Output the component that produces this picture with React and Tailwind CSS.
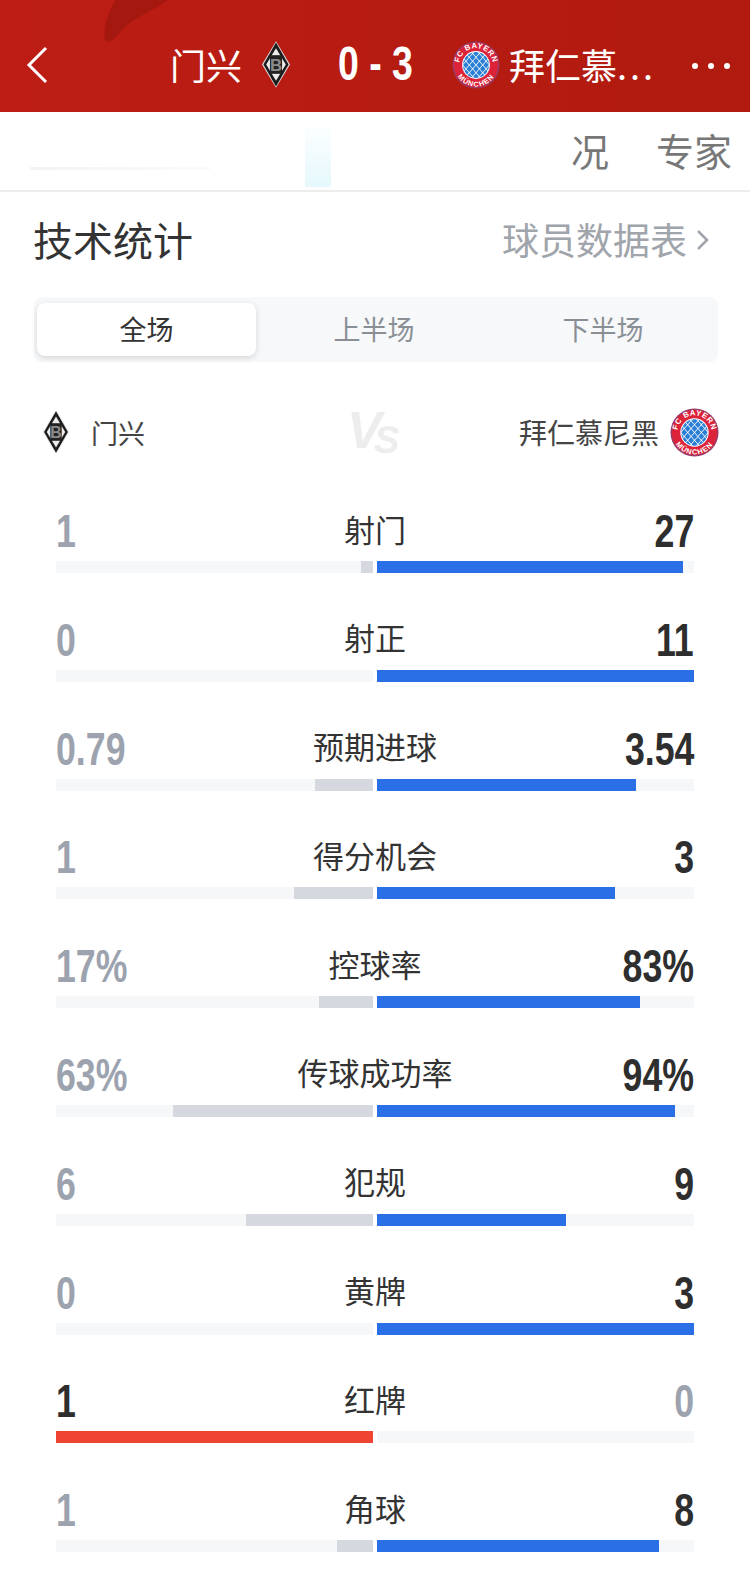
const stats = [
  { label: "射门", left: "1", right: "27", l: 12, r: 306 },
  { label: "射正", left: "0", right: "11", l: 0, r: 317 },
  { label: "预期进球", left: "0.79", right: "3.54", l: 58, r: 259 },
  { label: "得分机会", left: "1", right: "3", l: 79, r: 238 },
  { label: "控球率", left: "17%", right: "83%", l: 54, r: 263 },
  { label: "传球成功率", left: "63%", right: "94%", l: 200, r: 298 },
  { label: "犯规", left: "6", right: "9", l: 127, r: 189 },
  { label: "黄牌", left: "0", right: "3", l: 0, r: 317 },
  { label: "红牌", left: "1", right: "0", l: 317, r: 0, red: true },
  { label: "角球", left: "1", right: "8", l: 36, r: 282 },
];

const cjk = "font-['Noto_Sans_CJK_SC','Noto_Sans',sans-serif]";
const num = "font-['Liberation_Sans',sans-serif]";

const BayernLogo = ({ size, id }) => {
  const cells = [];
  for (let row = -4; row <= 4; row++) {
    for (let col = -4; col <= 4; col++) {
      if ((row + col) % 2 === 0) continue;
      const cx = 50 + col * 7;
      const cy = 50 + row * 8;
      cells.push(
        <polygon
          key={`${row}-${col}`}
          points={`${cx},${cy - 7} ${cx + 6},${cy} ${cx},${cy + 7} ${cx - 6},${cy}`}
          fill="#2a7fd4"
        />
      );
    }
  }
  return (
    <svg width={size} height={size} viewBox="0 0 100 100" className="shrink-0">
      <defs>
        <clipPath id={`${id}-c`}>
          <circle cx="50" cy="50" r="27" />
        </clipPath>
        <path id={`${id}-t`} d="M15 50 A35 35 0 0 1 85 50" />
        <path id={`${id}-b`} d="M5 50 A45 45 0 0 0 95 50" />
      </defs>
      <circle cx="50" cy="50" r="49" fill="#9a3a68" />
      <circle cx="50" cy="50" r="46" fill="#dc2339" />
      <circle cx="50" cy="50" r="29" fill="#fff" />
      <g clipPath={`url(#${id}-c)`}>{cells}</g>
      <text fontSize="16" fontWeight="700" letterSpacing="1" fill="#fff" fontFamily="'Liberation Sans',sans-serif" textAnchor="middle">
        <textPath href={`#${id}-t`} startOffset="50%">FC BAYERN</textPath>
      </text>
      <text fontSize="15" fontWeight="700" letterSpacing="2" fill="#fff" fontFamily="'Liberation Sans',sans-serif" textAnchor="middle">
        <textPath href={`#${id}-b`} startOffset="50%">MÜNCHEN</textPath>
      </text>
    </svg>
  );
};

const GladbachLogo = ({ w, h }) => (
  <svg width={w} height={h} viewBox="0 0 60 100" className="shrink-0">
    <polygon points="30,0 60,50 30,100 0,50" fill="#e0e0e0" />
    <polygon points="30,3 57,50 30,97 3,50" fill="#1c1c1c" />
    <polygon points="30,15 51,50 30,85 9,50" fill="#ececec" />
    <rect x="17" y="30" width="26" height="40" fill="#222" />
    <text x="30" y="63" fontSize="36" fontWeight="700" textAnchor="middle" fill="#8a8a8a" fontFamily="'Liberation Sans',sans-serif">B</text>
  </svg>
);

const StatRow = ({ stat }) => {
  const leftWins = stat.red;
  return (
    <div className="h-[108.8px] px-[56px] flex flex-col">
      <div className="h-[55px] pb-[6px] relative flex items-center justify-between">
        <span className={`${num} text-[47px] leading-none font-bold origin-left scale-x-[0.76] ${leftWins ? "text-[#2e2e2e]" : "text-[#9ca3af]"}`}>
          {stat.left}
        </span>
        <span className={`${cjk} absolute left-0 right-0 pb-[5px] text-center text-[31px] leading-none text-[#333]`}>
          {stat.label}
        </span>
        <span className={`${num} text-[47px] leading-none font-bold origin-right scale-x-[0.76] ${leftWins ? "text-[#9ca3af]" : "text-[#2e2e2e]"}`}>
          {stat.right}
        </span>
      </div>
      <div className="h-[12px] flex justify-between">
        <div className="w-[317px] bg-[#f6f7f9] flex justify-end">
          <div className={stat.red ? "bg-[#f04433]" : "bg-[#d6d8df]"} style={{ width: stat.l }} />
        </div>
        <div className="w-[317px] bg-[#f6f7f9] flex">
          <div className="bg-[#2a6fe6]" style={{ width: stat.r }} />
        </div>
      </div>
    </div>
  );
};

const App = () => {
  return (
    <div className={`w-[750px] h-[1575px] bg-white overflow-hidden ${cjk}`}>
      <div className="relative h-[112px] bg-gradient-to-r from-[#bd1d14] to-[#b01a0f] text-white overflow-hidden">
        <svg width="80" height="46" viewBox="0 0 80 46" className="absolute left-[100px] top-0">
          <path d="M16 0 L68 0 C52 12 32 18 22 30 C16 38 10 44 6 41 C2 36 6 14 16 0 Z" fill="#a5180f" />
        </svg>
        <div className="h-full pt-[41px] pl-[26px] pr-[20px] flex items-start">
          <svg width="22" height="38" viewBox="0 0 22 38" className="mt-[5px] shrink-0">
            <path d="M20 2 L3 19 L20 36" fill="none" stroke="#fff" strokeWidth="3" />
          </svg>
          <span className="ml-[122px] w-[73px] mt-[5px] text-[36px] leading-[36px] whitespace-nowrap">门兴</span>
          <div className="ml-[19px] shrink-0">
            <GladbachLogo w={28} h={47} />
          </div>
          <span className={`${num} ml-[48px] w-[95px] shrink-0 text-[48px] leading-[46px] font-bold whitespace-nowrap origin-left scale-x-[0.78]`}>0 - 3</span>
          <div className="ml-[19px] shrink-0">
            <BayernLogo size={48} id="top" />
          </div>
          <span className="ml-[9px] mt-[5px] w-[146px] text-[36px] leading-[36px] whitespace-nowrap">
            拜仁慕<span className="tracking-[3px]">...</span>
          </span>
          <div className="ml-[37px] mt-[22px] flex gap-[10px]">
            <div className="w-[6px] h-[6px] rounded-full bg-white" />
            <div className="w-[6px] h-[6px] rounded-full bg-white" />
            <div className="w-[6px] h-[6px] rounded-full bg-white" />
          </div>
        </div>
      </div>

      <div className="relative h-[80px] border-b-2 border-[#ececec] flex justify-end items-center pr-[18px] pb-[3px]">
        <div className="absolute left-[305px] top-[16px] w-[26px] h-[59px] bg-gradient-to-b from-[#fbfeff] to-[#e6f8fc]" />
        <div className="absolute left-[30px] top-[55px] w-[180px] h-[3px] bg-gradient-to-r from-[#f3f3f3] to-[#fbfbfb]" />
        <span className="text-[38px] leading-none text-[#777]">况</span>
        <span className="ml-[47px] text-[38px] leading-none text-[#777]">专家</span>
      </div>

      <div className="h-[105px] pl-[33px] pr-[40px] flex items-center justify-between pb-[11px]">
        <span className="text-[40px] leading-none text-[#333]">技术统计</span>
        <div className="flex items-center">
          <span className="text-[37px] leading-none text-[#a0a4ab]">球员数据表</span>
          <svg width="14" height="22" viewBox="0 0 14 22" className="ml-[9px] mt-[1px]">
            <path d="M2 2 L11 11 L2 20" fill="none" stroke="#a0a4ab" strokeWidth="2.5" />
          </svg>
        </div>
      </div>

      <div className="ml-[34px] w-[684px] h-[65px] rounded-lg bg-[#f7f8fa] pl-[3px] pr-[4px] flex items-center text-[27px]">
        <div className="w-[219px] h-[53px] rounded-lg bg-white shadow-[0_2px_6px_rgba(0,0,0,0.14)] flex items-center justify-center text-[#333]">
          全场
        </div>
        <div className="w-[236px] text-center text-[#8a8f96]">上半场</div>
        <div className="flex-1 text-center text-[#8a8f96]">下半场</div>
      </div>

      <div className="mt-[45px] h-[50px] pl-[42px] pr-[31px] flex items-center">
        <GladbachLogo w={28} h={44} />
        <span className="ml-[21px] text-[27px] leading-none text-[#444]">门兴</span>
        <div className="flex-1 flex justify-center pl-[86px]">
          <svg width="72" height="64" viewBox="0 0 72 64" className="-my-[8px]">
            <text x="8" y="48" fontSize="52" fontWeight="700" fontStyle="italic" fill="#ededed" fontFamily="'Liberation Sans',sans-serif">V</text>
            <text x="35" y="53" fontSize="38" fontWeight="700" fontStyle="italic" fill="#ededed" fontFamily="'Liberation Sans',sans-serif">S</text>
          </svg>
        </div>
        <span className="text-[28px] leading-none text-[#444]">拜仁慕尼黑</span>
        <div className="ml-[11px]">
          <BayernLogo size={49} id="row" />
        </div>
      </div>

      <div className="mt-[49px]">
        {stats.map((stat) => (
          <StatRow key={stat.label} stat={stat} />
        ))}
      </div>
    </div>
  );
};

export default App;
